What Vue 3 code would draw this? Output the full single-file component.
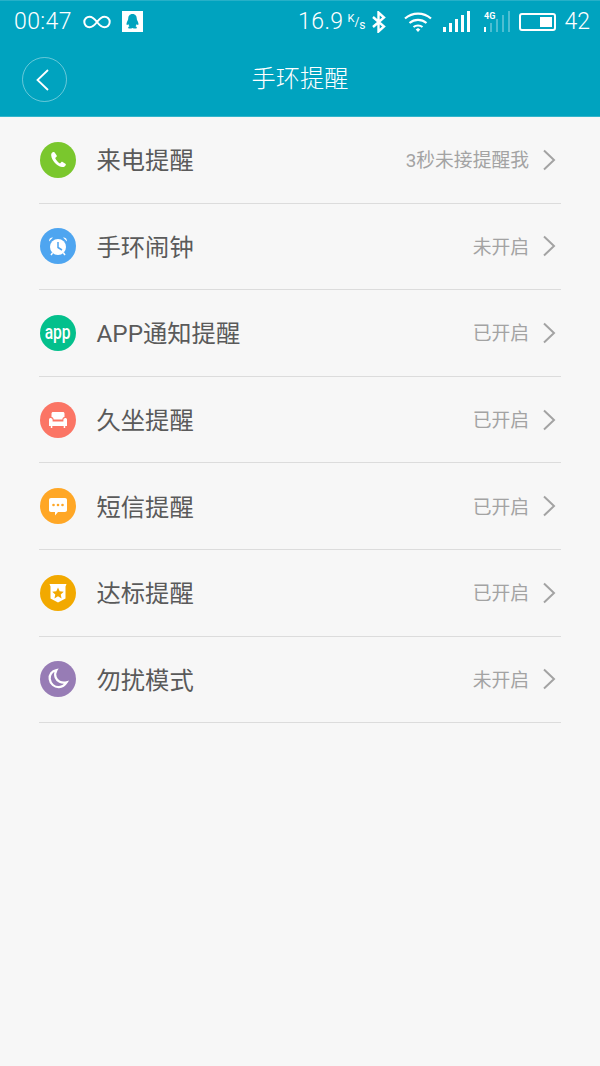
<template>
  <div class="page">
    <header class="header">
      <div class="status-bar">
        <div class="status-left">
          <span class="time">00:47</span>
          <svg class="infinity" width="28" height="14" viewBox="0 0 28 14">
            <path d="M14 7C11 3 9 1.800 6.500 1.800A5.200 5.200 0 0 0 6.500 12.200C9 12.200 11 11 14 7C17 3 19 1.800 21.500 1.800A5.200 5.200 0 0 1 21.500 12.200C19 12.200 17 11 14 7Z" fill="none" stroke="#fff" stroke-width="2" />
          </svg>
          <svg class="qq" width="21" height="21" viewBox="0 0 21 21">
            <rect width="21" height="21" fill="#fff" />
            <path d="M10.500 3C7.500 3 6.300 5.200 6.200 7.500C6.200 8.500 5.900 9 5.300 10.200C4.500 11.800 4.200 13.500 4.900 14C5.300 14.200 5.800 13.700 6.200 13.100C6.500 14 6.900 14.700 7.500 15.300C6.600 15.700 6 16.200 6.200 16.900C6.500 17.700 8.800 17.800 10.500 17C12.200 17.800 14.500 17.700 14.800 16.900C15 16.200 14.400 15.700 13.500 15.300C14.100 14.700 14.500 14 14.800 13.100C15.200 13.700 15.700 14.200 16.100 14C16.800 13.500 16.500 11.800 15.700 10.200C15.100 9 14.800 8.500 14.800 7.500C14.700 5.200 13.500 3 10.500 3Z" fill="#00a3bf" />
          </svg>
        </div>
        <div class="status-right">
          <span class="speed">16.9</span>
          <span class="unit"><sup>K</sup>/<sub>s</sub></span>
          <svg class="bt" width="16" height="22" viewBox="0 0 16 22">
            <path d="M2 6L13 15.500L7.500 20.500V1.500L13 6.500L2 16" fill="none" stroke="#fff" stroke-width="2.400" />
          </svg>
          <svg class="wifi" width="28" height="22" viewBox="0 0 28 22">
            <path d="M1 7.500C8.500 1 19.500 1 27 7.500M5.500 12C10.500 7.800 17.500 7.800 22.500 12M9.500 16C12 14 16 14 18.500 16" fill="none" stroke="#fff" stroke-width="2.200" />
            <path d="M11.700 18.600L14 16.900L16.300 18.600L14 21Z" fill="#fff" />
          </svg>
          <div class="bars">
            <i v-for="h in signalBars" :key="h" :style="{ height: h + 'px' }"></i>
          </div>
          <div class="sim2">
            <span class="four-g">4G</span>
            <div class="bars dim">
              <i v-for="(h, n) in signalBars" :key="h" :class="{ on: n === 0 }" :style="{ height: h + 'px' }"></i>
            </div>
          </div>
          <div class="battery">
            <div class="battery-fill"></div>
          </div>
          <span class="level">42</span>
        </div>
      </div>
      <div class="title-bar">
        <button class="back" type="button">
          <svg width="14" height="22" viewBox="0 0 14 22">
            <path d="M12 1L1.500 11L12 21" fill="none" stroke="#fff" stroke-width="1.800" />
          </svg>
        </button>
        <h1 class="title">手环提醒</h1>
      </div>
    </header>

    <ul class="list">
      <li v-for="item in items" :key="item.name" class="row">
        <span class="icon" :style="{ background: item.color }">
          <span v-if="item.icon === 'app'" class="app-text">app</span>
          <svg v-else width="36" height="36" viewBox="0 0 36 36">
            <template v-if="item.icon === 'phone'">
              <path d="M13.200 10C11.800 10.600 11 11.800 11.200 13.500C11.800 18.500 16.500 24 22 25C23.800 25.300 25.200 24.500 25.800 23C26 22.500 25.800 22.100 25.400 21.800L22.600 20C22.100 19.700 21.600 19.800 21.200 20.200L20 21.400C18 20.500 15.800 18 15.200 16L16.500 14.800C16.900 14.400 17 13.900 16.700 13.400L14.700 10.400C14.400 10 13.800 9.800 13.200 10Z" fill="#fff" />
            </template>
            <template v-else-if="item.icon === 'clock'">
              <circle cx="18" cy="19" r="8" fill="#fff" />
              <path d="M18 14V19.500L22 22" fill="none" stroke="#4ea5f0" stroke-width="1.500" />
              <path d="M9 13.500C8.800 11 10.500 9.300 13 9.500ZM27 13.500C27.200 11 25.500 9.300 23 9.500Z" fill="#fff" />
              <path d="M12.500 25L11 27M23.500 25L25 27" stroke="#fff" stroke-width="1.500" />
            </template>
            <template v-else-if="item.icon === 'sofa'">
              <path d="M11.500 11.500C11.500 10.700 12.200 10 13 10H23C23.800 10 24.500 10.700 24.500 11.500V15C23.200 15.200 22.400 16 22.400 17.500H13.600C13.600 16 12.800 15.200 11.500 15Z" fill="#fff" />
              <path d="M9 17.500C9 16.500 9.800 16 10.700 16C11.700 16 12.600 16.700 12.600 17.800V19.500H23.400V17.800C23.400 16.700 24.300 16 25.300 16C26.200 16 27 16.500 27 17.500V24H25.200V26H23.700V24H12.300V26H10.800V24H9Z" fill="#fff" />
            </template>
            <template v-else-if="item.icon === 'sms'">
              <path d="M11 10H25C26.200 10 27 10.800 27 12V22C27 23.200 26.200 24 25 24H18L15 27.500V24H11C9.800 24 9 23.200 9 22V12C9 10.800 9.800 10 11 10Z" fill="#fff" />
              <circle cx="13.500" cy="17" r="1.300" fill="#ffa726" />
              <circle cx="18" cy="17" r="1.300" fill="#ffa726" />
              <circle cx="22.500" cy="17" r="1.300" fill="#ffa726" />
            </template>
            <template v-else-if="item.icon === 'badge'">
              <path d="M9.500 9H26.500L25.500 11.500V23.500L18 27.500L10.500 23.500V11.500Z" fill="#fff" />
              <path d="M18 12.500L19.700 16.300L23.800 16.700L20.700 19.400L21.600 23.400L18 21.300L14.400 23.400L15.300 19.400L12.200 16.700L16.300 16.300Z" fill="#f2a900" />
            </template>
            <template v-else>
              <path d="M16.500 9C11.800 9.900 9.200 13.800 9.700 18C10.300 22.900 14.400 26.300 19 26.100C22.200 25.900 24.800 24.200 26.700 21.200C21.200 22.500 17 20 15.700 16.500C14.800 14 15.100 11.300 16.500 9Z" fill="none" stroke="#fff" stroke-width="2.200" />
            </template>
          </svg>
        </span>
        <span class="name">{{ item.name }}</span>
        <span class="state">{{ item.state }}</span>
        <svg class="chevron" width="14" height="22" viewBox="0 0 14 22">
          <path d="M2 1.500L12 11L2 20.500" fill="none" stroke="#a3a3a3" stroke-width="2" />
        </svg>
      </li>
    </ul>
  </div>
</template>

<script setup>
const signalBars = [5, 9, 13, 17, 21]

const items = [
  { name: '来电提醒', state: '3秒未接提醒我', icon: 'phone', color: '#7ac72d' },
  { name: '手环闹钟', state: '未开启', icon: 'clock', color: '#4ea5f0' },
  { name: 'APP通知提醒', state: '已开启', icon: 'app', color: '#04c08c' },
  { name: '久坐提醒', state: '已开启', icon: 'sofa', color: '#fb7565' },
  { name: '短信提醒', state: '已开启', icon: 'sms', color: '#ffa726' },
  { name: '达标提醒', state: '已开启', icon: 'badge', color: '#f2a900' },
  { name: '勿扰模式', state: '未开启', icon: 'moon', color: '#977cb5' }
]
</script>

<style>
html, body {
  margin: 0;
  background: #f7f7f7;
}
</style>

<style scoped>
.page {
  width: 600px;
  height: 1066px;
  background: #f7f7f7;
  font-family: Roboto, "Noto Sans CJK SC", sans-serif;
  overflow: hidden;
}

.header {
  height: 117px;
  box-sizing: border-box;
  background: #00a3bf;
  border-top: 1px solid #26b0c8;
  border-bottom: 1px solid #33b5cb;
  color: #fff;
}

.status-bar {
  height: 41px;
  display: flex;
  justify-content: space-between;
  align-items: center;
  padding: 0 10px 0 14px;
}

.status-left, .status-right {
  display: flex;
  align-items: center;
}

.time {
  font-size: 23px;
  font-weight: 300;
  letter-spacing: 0.4px;
}

.infinity {
  margin-left: 11px;
}

.qq {
  margin-left: 11px;
}

.speed {
  font-size: 23px;
  font-weight: 300;
  letter-spacing: 0.4px;
}

.unit {
  font-size: 12px;
  margin-left: 4px;
  width: 17px;
  white-space: nowrap;
}

.unit sup {
  font-size: 11px;
  vertical-align: 4px;
  line-height: 0;
}

.unit sub {
  font-size: 12px;
  vertical-align: -3px;
  line-height: 0;
}

.bt {
  margin-left: 7px;
}

.wifi {
  margin-left: 17px;
}

.bars {
  display: flex;
  align-items: flex-end;
  gap: 3.500px;
  margin-left: 11px;
  height: 21px;
}

.bars i {
  display: block;
  width: 2.500px;
  background: #fff;
}

.sim2 {
  position: relative;
  margin-left: 1px;
}

.bars.dim {
  margin-left: 13px;
}

.bars.dim i {
  background: rgba(255, 255, 255, 0.3);
}

.bars.dim i.on {
  background: #fff;
}

.four-g {
  position: absolute;
  left: 13px;
  top: 1px;
  font-size: 9px;
  font-weight: 700;
  line-height: 9px;
}

.battery {
  width: 37px;
  height: 18px;
  margin-left: 9px;
  box-sizing: border-box;
  border: 2px solid #fff;
  border-radius: 3px;
  padding: 2px;
  display: flex;
  justify-content: flex-end;
}

.battery-fill {
  width: 12px;
  background: #fff;
}

.level {
  font-size: 23px;
  font-weight: 300;
  margin-left: 8px;
}

.title-bar {
  position: relative;
  height: 74px;
  display: flex;
  align-items: center;
  justify-content: center;
}

.back {
  position: absolute;
  left: 22px;
  top: 15px;
  width: 45px;
  height: 45px;
  padding: 0 4px 0 0;
  display: flex;
  align-items: center;
  justify-content: center;
  background: none;
  border: 1px solid rgba(255, 255, 255, 0.4);
  border-radius: 50%;
}

.title {
  margin: 0;
  font-size: 24.200px;
  font-weight: 300;
  line-height: 30px;
}

.list {
  list-style: none;
  margin: 0;
  padding: 0 39px;
}

.row {
  height: 86.600px;
  box-sizing: border-box;
  display: flex;
  align-items: center;
  border-bottom: 1px solid #dcdcdc;
}

.icon {
  width: 36px;
  height: 36px;
  margin-left: 1px;
  border-radius: 50%;
  display: flex;
  align-items: center;
  justify-content: center;
  flex-shrink: 0;
}

.app-text {
  color: #fff;
  font-size: 20px;
  font-weight: 500;
  line-height: 1;
  position: relative;
  top: -1px;
  transform: scaleX(0.78);
}

.name {
  margin-left: 20.500px;
  flex: 1;
  font-size: 24.300px;
  font-weight: 400;
  color: #5a5a5a;
  position: relative;
  top: -1px;
}

.state {
  font-size: 18.800px;
  font-weight: 400;
  color: #a3a3a3;
  position: relative;
  top: -1px;
}

.chevron {
  margin-left: 13px;
  margin-right: 5px;
}
</style>
